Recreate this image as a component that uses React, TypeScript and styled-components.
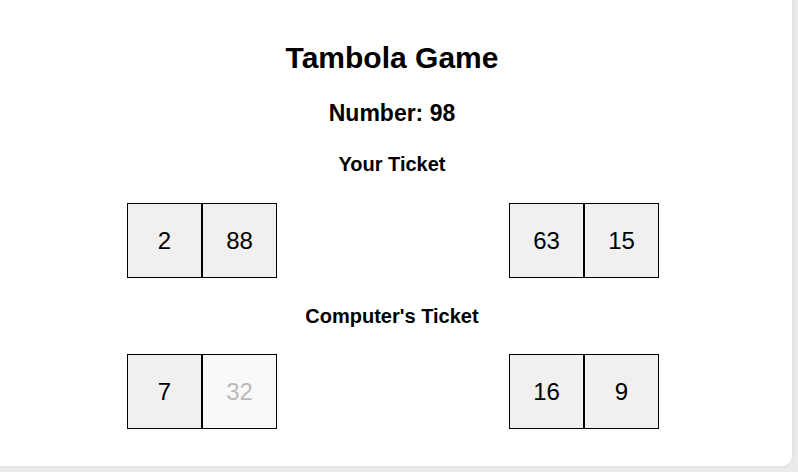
import React from "react";
import styled, { createGlobalStyle } from "styled-components";

const GlobalStyle = createGlobalStyle`
  html, body {
    margin: 0;
    padding: 0;
    background: #ebebeb;
    font-family: "Liberation Sans", Arial, sans-serif;
    overflow: hidden;
  }
`;

const Page = styled.div`
  padding-bottom: 6px;
`;

const Card = styled.div`
  width: 800px;
  margin: -20px 0 0 -8px;
  padding: 61px 0 37px;
  box-sizing: border-box;
  background: #fff;
  border-radius: 10px;
  box-shadow: 0 0 4px rgba(0, 0, 0, 0.08);
  display: flex;
  flex-direction: column;
  align-items: stretch;
  text-align: center;
  color: #000;
`;

const Title = styled.h1`
  margin: 0;
  font-size: 30px;
  font-weight: bold;
  line-height: normal;
`;

const Current = styled.h2`
  margin: 25px 0 0;
  font-size: 23px;
  font-weight: bold;
  line-height: normal;
`;

const Heading = styled.h3<{ $gap: number }>`
  margin: ${(p) => p.$gap}px 0 0;
  font-size: 20px;
  font-weight: bold;
  line-height: normal;
`;

const Row = styled.div<{ $gap: number }>`
  margin-top: ${(p) => p.$gap}px;
  display: flex;
  justify-content: space-between;
  padding: 0 133px 0 135px;
`;

const Group = styled.div`
  display: flex;
`;

const Cell = styled.div<{ $marked?: boolean }>`
  width: 75px;
  height: 75px;
  box-sizing: border-box;
  border: 1px solid #000;
  background: ${(p) => (p.$marked ? "#f9f9f9" : "#f0f0f0")};
  color: ${(p) => (p.$marked ? "#b9b9b9" : "#000")};
  font-size: 24px;
  display: flex;
  align-items: center;
  justify-content: center;
`;

type Num = { n: number; marked?: boolean };

const Ticket = ({ groups, gap }: { groups: Num[][]; gap: number }) => (
  <Row $gap={gap}>
    {groups.map((g, i) => (
      <Group key={i}>
        {g.map((c) => (
          <Cell key={c.n} $marked={c.marked}>
            {c.n}
          </Cell>
        ))}
      </Group>
    ))}
  </Row>
);

export default function App() {
  return (
    <Page>
      <GlobalStyle />
      <Card>
        <Title>Tambola Game</Title>
        <Current>Number: 98</Current>
        <Heading $gap={26}>Your Ticket</Heading>
        <Ticket gap={27} groups={[[{ n: 2 }, { n: 88 }], [{ n: 63 }, { n: 15 }]]} />
        <Heading $gap={27}>Computer's Ticket</Heading>
        <Ticket
          gap={26}
          groups={[
            [{ n: 7 }, { n: 32, marked: true }],
            [{ n: 16 }, { n: 9 }],
          ]}
        />
      </Card>
    </Page>
  );
}
